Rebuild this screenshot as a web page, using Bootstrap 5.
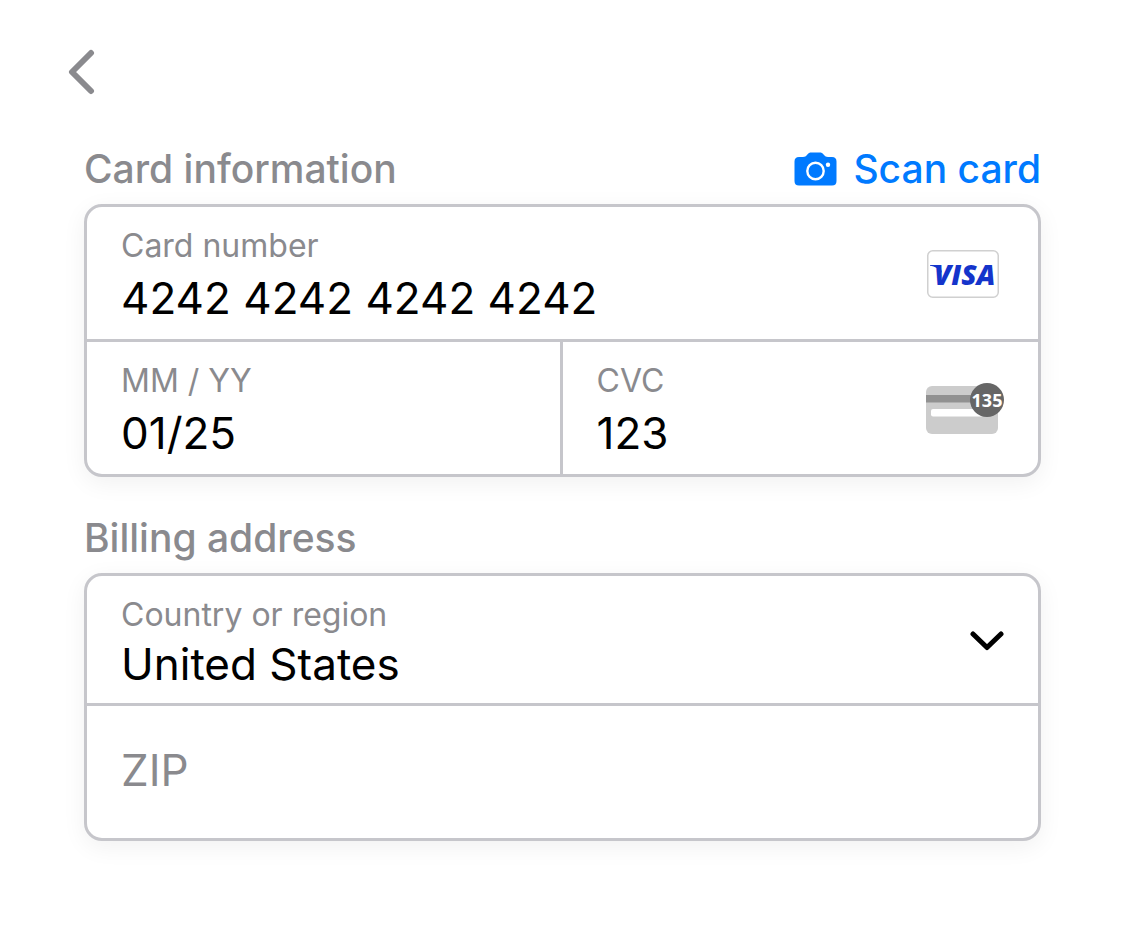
<!DOCTYPE html>
<html lang="en">
<head>
<meta charset="utf-8">
<meta name="viewport" content="width=device-width, initial-scale=1">
<title>Add card</title>
<link href="https://cdn.jsdelivr.net/npm/bootstrap@5.3.0/dist/css/bootstrap.min.css" rel="stylesheet">
<style>
  body { font-family: Inter, "Liberation Sans", sans-serif; background: #fff; color: #000; }
  .sheet { padding: 44px 84px 84px; }
  .back-btn { margin-left: -20px; margin-bottom: 44px; line-height: 0; }
  .section-title { font-size: 39px; line-height: 50px; font-weight: 500; color: #8a8a8e; }
  .scan-link { font-size: 39px; line-height: 50px; font-weight: 500; color: #007aff; gap: 16px; }
  .section-head { margin-bottom: 10px; }
  .field-group { border: 3px solid #c6c6cb; border-radius: 18px; background: #fff; box-shadow: 0 6px 24px rgba(0, 0, 0, .06); margin-bottom: 36px; }
  .line-top { border-top: 3px solid #c6c6cb; }
  .line-end { border-right: 3px solid #c6c6cb; }
  .field { padding: 17px 34px 11px; }
  .field label { font-size: 32px; line-height: 44px; color: #8a8a8e; }
  .field .form-control, .field .form-select { font-size: 44px; line-height: 60px; height: 60px; color: #000; background: none; border: 0; border-radius: 0; padding: 0; }
  .field .form-select { line-height: 55px; height: 55px; }
  .field .form-control:focus, .field .form-select:focus { box-shadow: none; }
  .zip-field { padding: 12px 34px 16px; }
  .field .zip-input { height: 104px; line-height: 104px; }
  .zip-input::placeholder { color: #8a8a8e; opacity: 1; }
  .field svg { margin-bottom: 4px; }
  .brand-icon { margin-right: 5px; }
</style>
</head>
<body>
<main class="sheet">
  <button type="button" class="btn p-0 border-0 back-btn" aria-label="Back">
    <svg width="36" height="56" viewBox="0 0 36 56" fill="none" stroke="#8a8a8e" stroke-width="6" stroke-linecap="round" stroke-linejoin="round"><path d="M27 9 8 28 27 47"/></svg>
  </button>
  <form>
    <div class="d-flex justify-content-between section-head">
      <h2 class="section-title mb-0">Card information</h2>
      <a href="#" class="scan-link d-flex align-items-center text-decoration-none">
        <svg width="43" height="34" viewBox="0 0 43 34" aria-hidden="true">
          <path fill="#007aff" d="M5 5H9C11 5 12 4.300 13 3 14.500 1 15.500.500 17.500.500H25.500C27.500.500 28.500 1 30 3 31 4.300 32 5 34 5H38Q42.500 5 42.500 9.500V29Q42.500 33.500 38 33.500H5Q.500 33.500.500 29V9.500Q.500 5 5 5Z"/>
          <circle cx="21.500" cy="19" r="8.200" fill="none" stroke="#fff" stroke-width="2.400"/>
          <circle cx="34" cy="12.700" r="2.200" fill="#fff"/>
        </svg>
        <span>Scan card</span>
      </a>
    </div>
    <div class="field-group">
      <div class="field d-flex align-items-center">
        <div class="flex-grow-1">
          <label class="d-block" for="number">Card number</label>
          <input id="number" class="form-control" type="text" inputmode="numeric" value="4242 4242 4242 4242">
        </div>
        <svg class="brand-icon flex-shrink-0" width="72" height="48" viewBox="0 0 72 48" role="img" aria-label="Visa">
          <rect x=".750" y=".750" width="70.500" height="46.500" rx="5" fill="#fff" stroke="#d0d0d0" stroke-width="1.500"/>
          <path fill="#1434cb" d="M3 15H13L15 23C12 18.500 8 16.500 3 15.800Z"/>
          <text x="7" y="34.500" font-family="Open Sans" font-size="28" font-weight="800" font-style="italic" fill="#1434cb">VISA</text>
        </svg>
      </div>
      <div class="row g-0 line-top">
        <div class="col-6 line-end">
          <div class="field">
            <label class="d-block" for="expiry">MM / YY</label>
            <input id="expiry" class="form-control" type="text" inputmode="numeric" value="01/25">
          </div>
        </div>
        <div class="col-6">
          <div class="field d-flex align-items-center">
            <div class="flex-grow-1">
              <label class="d-block" for="cvc">CVC</label>
              <input id="cvc" class="form-control" type="text" inputmode="numeric" value="123">
            </div>
            <svg class="flex-shrink-0" width="78" height="54" viewBox="0 0 78 54" aria-hidden="true">
              <rect y="4" width="72" height="48" rx="6" fill="#ccc"/>
              <path fill="#919191" d="M0 13H50V20.500H0Z"/>
              <rect x="5" y="27" width="52" height="7.500" rx="2" fill="#fff"/>
              <circle cx="61" cy="18" r="17" fill="#666"/>
              <text x="61" y="25" text-anchor="middle" font-family="Open Sans" font-size="18" font-weight="700" fill="#fff">135</text>
            </svg>
          </div>
        </div>
      </div>
    </div>

    <h2 class="section-title section-head">Billing address</h2>
    <div class="field-group mb-0">
      <div class="field d-flex align-items-center">
        <div class="flex-grow-1">
          <label class="d-block" for="country">Country or region</label>
          <select id="country" class="form-select"><option>United States</option></select>
        </div>
        <svg class="flex-shrink-0 pe-none" width="36" height="24" viewBox="0 0 36 24" fill="none" stroke="#000" stroke-width="5" stroke-linecap="round" stroke-linejoin="round" aria-hidden="true"><path d="M5 5 19 18.500 33 5"/></svg>
      </div>
      <div class="field zip-field line-top">
        <input id="zip" class="form-control zip-input" type="text" placeholder="ZIP" aria-label="ZIP">
      </div>
    </div>
  </form>
</main>
<script src="https://cdn.jsdelivr.net/npm/bootstrap@5.3.0/dist/js/bootstrap.bundle.min.js"></script>
</body>
</html>
